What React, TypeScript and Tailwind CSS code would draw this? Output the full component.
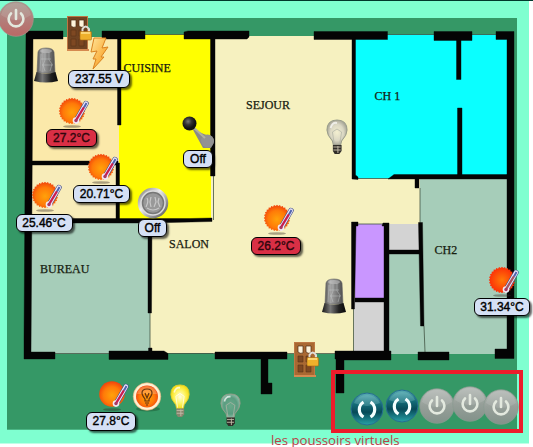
import type { ReactNode } from "react";

type Box = { x: number; y: number; w: number; h: number };

function Pin({ x, y, w, h, children }: Box & { children: ReactNode }) {
  return (
    <div className="absolute" style={{ left: x, top: y, width: w, height: h }}>
      {children}
    </div>
  );
}

function Label({ x, y, w, h, alert, children }: Box & { alert?: boolean; children: string }) {
  return (
    <div
      className={`absolute flex items-center justify-center whitespace-nowrap rounded-[6px] border-[1.5px] border-black text-[12px] leading-none shadow-[2px_2px_2px_rgba(0,0,0,0.6)] [-webkit-text-stroke:0.4px_currentColor] ${
        alert ? "bg-[#d92f45] text-[#30060c]" : "bg-[#d5e0f5] text-black"
      }`}
      style={{ left: x, top: y, width: w, height: h }}
    >
      {children}
    </div>
  );
}

function RoomName({ x, y, children }: { x: number; y: number; children: string }) {
  return (
    <div
      className="absolute whitespace-nowrap font-['Liberation_Serif',serif] text-[12px] leading-[14px] text-[#16200f] [-webkit-text-stroke:0.25px_currentColor]"
      style={{ left: x, top: y }}
    >
      {children}
    </div>
  );
}

function Gradients() {
  return (
    <svg className="absolute size-0">
      <defs>
        <radialGradient id="sun" cx="0.5" cy="0.55" r="0.55">
          <stop offset="0" stopColor="#ffa20a" />
          <stop offset="0.6" stopColor="#ff7a08" />
          <stop offset="1" stopColor="#f0400c" />
        </radialGradient>
        <radialGradient id="sunHot">
          <stop offset="0" stopColor="#ff7a08" />
          <stop offset="1" stopColor="#fb2d08" />
        </radialGradient>
        <linearGradient id="metal">
          <stop offset="0" stopColor="#555" />
          <stop offset="0.3" stopColor="#a5a5a5" />
          <stop offset="0.6" stopColor="#808080" />
          <stop offset="1" stopColor="#4c4c4c" />
        </linearGradient>
        <linearGradient id="base">
          <stop offset="0" stopColor="#171717" />
          <stop offset="0.35" stopColor="#777" />
          <stop offset="0.7" stopColor="#222" />
          <stop offset="1" stopColor="#080808" />
        </linearGradient>
        <linearGradient id="bolt" x1="0" y1="0" x2="1" y2="1">
          <stop offset="0" stopColor="#ffe59a" />
          <stop offset="1" stopColor="#f8930c" />
        </linearGradient>
        <linearGradient id="teal" x1="0" y1="0" x2="0" y2="1">
          <stop offset="0" stopColor="#5aaeb4" />
          <stop offset="0.35" stopColor="#146c78" />
          <stop offset="0.6" stopColor="#074a58" />
          <stop offset="1" stopColor="#27a3a8" />
        </linearGradient>
        <linearGradient id="gray" x1="0" y1="0" x2="0" y2="1">
          <stop offset="0" stopColor="#b5bab6" />
          <stop offset="0.5" stopColor="#969f99" />
          <stop offset="1" stopColor="#83928a" />
        </linearGradient>
        <linearGradient id="redDisc" x1="0" y1="0" x2="0" y2="1">
          <stop offset="0" stopColor="#a89a90" />
          <stop offset="0.5" stopColor="#b27f7b" />
          <stop offset="1" stopColor="#bb6865" />
        </linearGradient>
        <radialGradient id="glass">
          <stop offset="0" stopColor="#f3efd0" />
          <stop offset="0.65" stopColor="#dad7c3" />
          <stop offset="1" stopColor="#aaa899" />
        </radialGradient>
        <radialGradient id="lit">
          <stop offset="0" stopColor="#fffce0" />
          <stop offset="0.55" stopColor="#fff568" />
          <stop offset="1" stopColor="#f5df19" />
        </radialGradient>
        <radialGradient id="dim">
          <stop offset="0" stopColor="#69a98a" />
          <stop offset="0.7" stopColor="#5a9d80" />
          <stop offset="1" stopColor="#88b8a2" />
        </radialGradient>
        <linearGradient id="rim" x1="0" y1="0" x2="1" y2="1">
          <stop offset="0" stopColor="#777" />
          <stop offset="0.4" stopColor="#eee" />
          <stop offset="0.7" stopColor="#999" />
          <stop offset="1" stopColor="#555" />
        </linearGradient>
        <radialGradient id="knob" cx="0.4" cy="0.35">
          <stop offset="0" stopColor="#777" />
          <stop offset="0.5" stopColor="#333" />
          <stop offset="1" stopColor="#111" />
        </radialGradient>
      </defs>
    </svg>
  );
}

const rooms: [number, number, number, number, string][] = [
  [30, 37, 89, 128, "#fbe9aa"],
  [30, 164, 89, 58, "#f8ecb9"],
  [31, 221, 119, 133, "#a6cdb9"],
  [119, 34.5, 93, 186, "#ffff00"],
  [213, 36, 142, 318, "#f6f1c0"],
  [211, 176, 4, 45, "#f6f1c0"],
  [150, 221, 205, 132, "#f6f1c0"],
  [352, 178, 68, 46, "#f6f1c0"],
  [354, 34.5, 153, 144, "#0affff"],
  [420, 178, 88, 176, "#a6cdb9"],
  [388, 254, 33, 100, "#a6cdb9"],
  [355, 224, 30, 75, "#c996ff"],
  [388, 224, 32, 27, "#d3d3d3"],
  [354, 300, 31, 52, "#d3d3d3"],
];

const walls = [
  "M26 31H63V39H33L31 352H55V359H24V340Z",
  "M102 31H145V39H102ZM184 32L188 31H249V37L247 39H184ZM314 31.5H387.500V39.500H314ZM434 31.500H472V40.500H434ZM496 31.500H514V358.500H495V349H507V39.500H496Z",
  "M117.500 38H121V125H117.500ZM31 161H118V165H31ZM116 163H119.500V220H116ZM31 218.500H190L212 218V221.500L150 223H31Z",
  "M148 222H152L151.500 313H148ZM148.500 348H152V352H148.500ZM210.500 38H215V176H210.500Z",
  "M352 38H355.500V175L358 177V179.500L352 179ZM456.500 39H461V79.500H456.500ZM457.500 108H462V175H457.500ZM394 174.500H507V179H388ZM415 178H419V188H415Z",
  "M351.500 222H358V226H356L354.500 309H351.500ZM383 223H389V352H384V226H382ZM355 298H385V302H355ZM388 250H420V254H388ZM418.500 222.500H422.500L424 326H420.500Z",
  "M109 351H164L168 353.500V359.500H109ZM215 352H287V359H268V383H272V394H261V359H215ZM335 351H391V360H344V393H336V359H335ZM418 352H449V360H418Z",
];

function FloorPlan() {
  return (
    <svg className="block" width="533" height="447" viewBox="0 0 533 447">
      <rect width="529" height="443.500" fill="#7fffd0" />
      <rect width="533" height="1" fill="#00382c" />
      <rect x="7" y="18" width="510" height="411.700" fill="#359866" />
      {rooms.map(([x, y, w, h, fill], i) => (
        <rect key={i} x={x} y={y} width={w} height={h} fill={fill} />
      ))}
      <path
        d="M145 34.500H184M387 34.500H434M472 34.500H496M55 353.500H109M168 353.500H215M287 353.500H335M213.500 176V220M150 313V348M420 188V223M424 326L425 352M353.500 309V351M357 178.500H389M356 224H384"
        fill="none"
        stroke="#415442"
        strokeWidth="0.8"
      />
      <path d={walls.join("")} fill="#040404" stroke="#040404" strokeWidth="0.4" strokeLinejoin="round" />
    </svg>
  );
}

const rays = Array.from({ length: 56 }, (_, i) => {
  const angle = (i * Math.PI) / 28;
  const radius = i % 2 ? 12 : 13.3;
  return `${14 + radius * Math.cos(angle)},${14 + radius * Math.sin(angle)}`;
}).join(" ");

function SunThermometer({ x, y, hot, smooth }: { x: number; y: number; hot?: boolean; smooth?: boolean }) {
  return (
    <Pin x={x} y={y} w={34} h={32}>
      <svg viewBox="0 0 34 32">
        <ellipse cx="14" cy="29.500" rx="9" ry="1.300" fill="#352a22" opacity="0.4" />
        {smooth ? (
          <circle cx="14" cy="14" r="12.800" fill="url(#sun)" />
        ) : (
          <polygon points={rays} fill={hot ? "url(#sunHot)" : "url(#sun)"} />
        )}
        <path d="M28 6.500L18.500 23" stroke="#43518c" strokeWidth="5.400" strokeLinecap="round" />
        <path d="M28 6.500L18.500 23" stroke="#efe9f8" strokeWidth="4.200" strokeLinecap="round" />
        <circle cx="18" cy="23.600" r="3.300" fill="#f1eaf6" />
        <path d="M25.500 11L18.500 22.500" stroke={hot ? "#a75462" : "#c81d50"} strokeWidth="2.400" strokeLinecap="round" />
        <path d="M28.500 6L26 10.500" stroke="#4d63ae" strokeWidth="2" />
        <circle cx="18" cy="23.500" r="1.700" fill="#a93a62" />
      </svg>
    </Pin>
  );
}

function Beacon({ x, y }: { x: number; y: number }) {
  return (
    <Pin x={x} y={y} w={24} h={36}>
      <svg viewBox="0 0 24 36">
        <path d="M3 26L4 5Q5 1 12 1T20 5L21 26Z" fill="url(#metal)" stroke="#666" strokeWidth="0.6" />
        <path d="M7 7L6 24M11 6V13L9 18L11 24M15 5V13L18 17L16 24M7 12H17M8 18H19" fill="none" stroke="#ced1d1" strokeWidth="1" opacity="0.4" />
        <ellipse cx="12" cy="4" rx="6" ry="2" fill="#ccc" opacity="0.5" />
        <path d="M2.500 25Q12 28 21.500 25L24 34Q12 37 0 34Z" fill="url(#base)" />
      </svg>
    </Pin>
  );
}

function Door({ x, y, w, h, warm }: Box & { warm?: boolean }) {
  return (
    <Pin x={x} y={y} w={w} h={h}>
      <svg width={w} height={h} viewBox="0 0 25 35" preserveAspectRatio="none">
        <rect x="0.5" y="0.5" width="20" height="33" fill={warm ? "#a96832" : "#704322"} stroke="#bd7744" />
        <path d="M0 34H22" stroke="#d58a50" strokeWidth="2" />
        <path d="M4 4H9V11Q6 12 4 10ZM12 4H17V11Q14 12 12 10Z" fill="#fff4dc" stroke="#4c2b14" strokeWidth="0.7" />
        <path d="M4 14H9V20H4ZM12 14H17V20H12ZM4 23H9V30H4ZM12 23H17V30H12Z" fill="#7e4822" stroke="#5b321a" strokeWidth="0.6" />
        <path d="M15.500 16V13Q18.500 8 22 13V17" fill="none" stroke="#e0ded8" strokeWidth="2" />
        <rect x="13" y="15.500" width="11.500" height="8.500" rx="1" fill="#efb02b" stroke="#aa6913" strokeWidth="0.6" />
        <path d="M14 17H23" stroke="#ffe28b" strokeWidth="1.500" />
      </svg>
    </Pin>
  );
}

function Bulb({ x, y, w, h, kind }: Box & { kind: "off" | "lit" | "dim" }) {
  const fills = { off: "url(#glass)", lit: "url(#lit)", dim: "url(#dim)" };
  return (
    <Pin x={x} y={y} w={w} h={h}>
      <svg width={w} height={h} viewBox="0 0 24 36" preserveAspectRatio="none">
        <path d="M8 26L7 22Q1 16 1 11Q1 1 12 1T23 11Q23 16 17 22L16 26Z" fill={fills[kind]} stroke={kind === "lit" ? "#e5cf28" : "#969b89"} />
        <path d="M9 25L7 13L12 10L17 13L15 25" fill="none" stroke={kind === "lit" ? "#fff" : "#b3b6a8"} strokeWidth="0.8" />
        <path d="M5 9Q7 3 12 4" fill="none" stroke="#fff" strokeWidth="2" opacity="0.7" />
        <path d="M7.500 26H17V32L14.500 35H9.500L7.500 32Z" fill={kind === "lit" ? "#88866e" : "#302d28"} />
        <path d="M8 28H16M8 31H16M13 27V34" stroke="#c2bba8" strokeWidth="1" />
      </svg>
    </Pin>
  );
}

function PowerButton({ className, red }: { className: string; red?: boolean }) {
  return (
    <svg className={className} viewBox="0 0 36 36">
      <circle cx="18" cy="18" r="17.300" fill={red ? "url(#redDisc)" : "url(#gray)"} stroke={red ? "#ab918b" : "#8a9b90"} strokeWidth="0.7" />
      <path d="M3 14Q6 2 18 2T33 14Q18 24 3 14Z" fill="#eee" opacity="0.13" />
      <path d="M13 12.500A7.400 7.400 0 1 0 23 12.500M18 9V18" fill="none" stroke="#e3e9df" strokeWidth="2.600" strokeLinecap="round" />
    </svg>
  );
}

function PushButton({ className }: { className: string }) {
  return (
    <svg className={className} viewBox="0 0 34 34">
      <circle cx="17" cy="17" r="16" fill="url(#teal)" stroke="#266e91" />
      <path d="M4 11Q8 3 17 3T30 11Q17 17 4 11Z" fill="#a4dce0" opacity="0.25" />
      <path d="M13.500 10A8.800 8.800 0 0 0 13.500 25M20.500 10A8.800 8.800 0 0 1 20.500 25" fill="none" stroke="#f5ffff" strokeWidth="3.200" />
    </svg>
  );
}

export default function App() {
  return (
    <main className="relative h-[447px] w-[533px] overflow-hidden bg-white font-['Liberation_Sans',sans-serif]">
      <Gradients />
      <FloorPlan />

      <RoomName x={123.500} y={60.500}>CUISINE</RoomName>
      <RoomName x={246} y={98}>SEJOUR</RoomName>
      <RoomName x={374.500} y={89}>CH 1</RoomName>
      <RoomName x={169} y={237}>SALON</RoomName>
      <RoomName x={40} y={262}>BUREAU</RoomName>
      <RoomName x={434.500} y={243}>CH2</RoomName>

      <PowerButton className="absolute -left-[2px] top-[1px] size-9" red />
      <Door x={67} y={16} w={25} h={35} />
      <Beacon x={33.500} y={47} />
      <Pin x={90} y={37} w={19} h={33}>
        <svg viewBox="0 0 19 33">
          <path d="M4 1H16L12 11L18 10L11 20L14 20L3 32L6 22H3L7 14L1 15Z" fill="url(#bolt)" stroke="#d98220" />
        </svg>
      </Pin>
      <SunThermometer x={58} y={97} />
      <SunThermometer x={87} y={153} />
      <SunThermometer x={31} y={181} />
      <SunThermometer x={263} y={204} />
      <SunThermometer x={488} y={266} hot />
      <SunThermometer x={98} y={380} smooth />

      <Pin x={182} y={116} w={34} h={36}>
        <svg viewBox="0 0 34 36">
          <path d="M10 12L21 32H29Q35 24 29 20Q24 20 10 12Z" fill="#8a8a88" />
          <circle cx="25.500" cy="25" r="6.500" fill="#929292" />
          <path d="M10 10L23 22" stroke="#b0b0a0" strokeWidth="2" />
          <circle cx="7.500" cy="7.500" r="7" fill="url(#knob)" />
        </svg>
      </Pin>
      <Pin x={136.500} y={187} w={32} h={32}>
        <svg viewBox="0 0 32 32">
          <circle cx="16" cy="16" r="14" fill="#ddd" stroke="url(#rim)" strokeWidth="2.500" />
          <circle cx="16" cy="16" r="10.500" fill="#999" stroke="#777" strokeWidth="1.500" />
          <path d="M10 11Q12 14 9 20M14 10L13 15L14 20M18 10L19 15L17 20M22 11L21 15L23 20M10 21Q16 25 22 21" fill="none" stroke="#d8d8d8" strokeWidth="1.200" opacity="0.75" />
        </svg>
      </Pin>
      <Bulb x={325.500} y={118.500} w={22} h={36} kind="off" />
      <Beacon x={321.500} y={278} />
      <Door x={294} y={342} w={25} h={35} warm />

      <Pin x={132} y={382} w={30} h={30}>
        <svg viewBox="0 0 30 30">
          <ellipse cx="16" cy="27" rx="12" ry="2.500" fill="#1e5735" opacity="0.5" />
          <circle cx="15" cy="14.500" r="13.800" fill="#fff0d2" stroke="#e2aa71" strokeWidth="0.6" />
          <circle cx="15" cy="14.500" r="11" fill="url(#sun)" />
          <path d="M5 12Q7 4 15 4T25 12Z" fill="#ffe3b0" opacity="0.3" />
          <path d="M13 19V17Q10 13 10 11Q10 7 15 7T20 11Q20 13 17 17V19ZM13 21H17M14 23H16M13 11L15 16L17 11" fill="none" stroke="#693410" strokeWidth="1.200" />
        </svg>
      </Pin>
      <Bulb x={170} y={384} w={20} h={34} kind="lit" />
      <Bulb x={219.500} y={393} w={21} h={34} kind="dim" />

      {/* Virtual push buttons framed over the garden, with their caption */}
      <section className="absolute left-[271px] top-[370px] flex flex-col">
        <div className="ml-[60px] flex h-[63px] w-[192px] items-start border-[4.500px] border-[#ed1c2b] pl-[15px] pt-[12px]">
          <PushButton className="mt-[6px] size-[34px] shrink-0" />
          <PushButton className="ml-px mt-[3px] size-[34px] shrink-0" />
          <PowerButton className="mt-[2px] size-9 shrink-0" />
          <PowerButton className="-ml-[3px] size-9 shrink-0" />
          <PowerButton className="-ml-[5px] mt-[3px] size-9 shrink-0" />
        </div>
        <p className="whitespace-nowrap font-['Open_Sans',sans-serif] text-[13.200px] leading-[14px] text-[#b83f48]">
          les poussoirs virtuels
        </p>
      </section>

      <Label x={68} y={69.500} w={62} h={18.500}>237.55 V</Label>
      <Label x={46} y={129} w={51} h={18} alert>27.2°C</Label>
      <Label x={73} y={185} w={57} h={18}>20.71°C</Label>
      <Label x={15.500} y={214} w={57} h={18}>25.46°C</Label>
      <Label x={183} y={150} w={30} h={18}>Off</Label>
      <Label x={138} y={219} w={29} h={18}>Off</Label>
      <Label x={251} y={236.500} w={50} h={18.500} alert>26.2°C</Label>
      <Label x={474} y={298} w={56} h={18}>31.34°C</Label>
      <Label x={86} y={412} w={50} h={18.500}>27.8°C</Label>
    </main>
  );
}
